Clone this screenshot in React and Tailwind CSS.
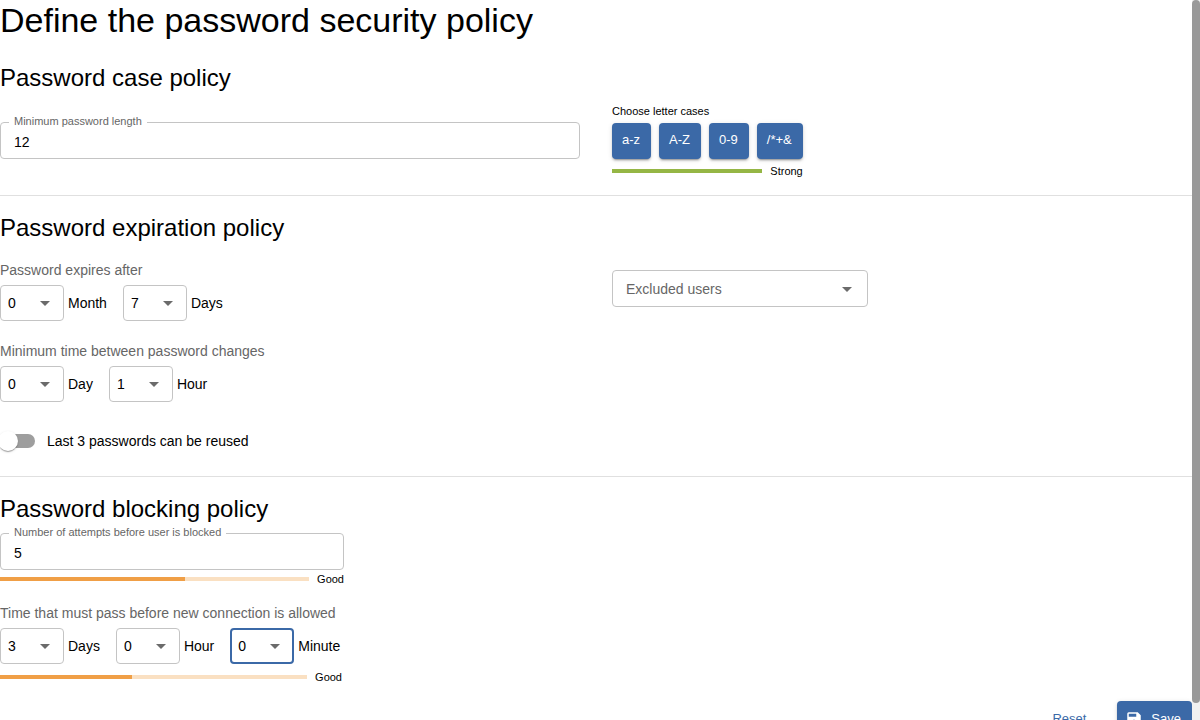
import React, { useState } from 'react';
import { MdSave, MdArrowDropDown } from 'react-icons/md';

const range = (n) => Array.from({ length: n }, (_, i) => i);

function UnitSelect({ id, unit, value, max, focused }) {
  const [current, setCurrent] = useState(value);
  return (
    <div className="flex items-center gap-1">
      <div className="relative">
        <select
          id={id}
          value={current}
          onChange={(e) => setCurrent(Number(e.target.value))}
          className={
            focused
              ? 'block h-9 w-16 appearance-none rounded border-2 border-[#3b69a7] bg-white pl-1.5 text-sm outline-none'
              : 'block h-9 w-16 appearance-none rounded border border-[#c4c4c4] bg-white pl-[7px] text-sm outline-none focus:border-[#3b69a7]'
          }
        >
          {range(max + 1).map((n) => (
            <option key={n} value={n}>
              {n}
            </option>
          ))}
        </select>
        <MdArrowDropDown
          size={24}
          className="pointer-events-none absolute top-1.5 right-[7px] text-[#6b6b6b]"
        />
      </div>
      <label htmlFor={id} className="text-sm">
        {unit}
      </label>
    </div>
  );
}

function TextField({ id, label, value }) {
  return (
    <fieldset className="rounded border border-[#c4c4c4]">
      <legend className="ml-2 px-[5px] pb-0.5 text-[11px] leading-3 text-[#666666]">
        <label htmlFor={id}>{label}</label>
      </legend>
      <input
        id={id}
        type="number"
        defaultValue={value}
        className="block h-[29px] w-full appearance-none bg-transparent px-[13px] pb-1 text-sm outline-none [appearance:textfield]"
      />
    </fieldset>
  );
}

function Strength({ label, percent, track, bar }) {
  return (
    <div className="flex items-center gap-2">
      <div className={`h-1 flex-1 ${track}`}>
        <div className={`h-full ${bar}`} style={{ width: `${percent}%` }} />
      </div>
      <span className="text-[11px] leading-3">{label}</span>
    </div>
  );
}

function CaseButton({ children }) {
  return (
    <button
      type="button"
      className="h-9 rounded bg-[#3b69a7] pr-[11px] pb-0.5 pl-2.5 text-[13px] text-white shadow-[0_3px_1px_-2px_rgba(0,0,0,0.2),0_2px_2px_0_rgba(0,0,0,0.14),0_1px_5px_0_rgba(0,0,0,0.12)]"
    >
      {children}
    </button>
  );
}

export default function App() {
  return (
    <div className="flex h-screen bg-white font-['Liberation_Sans',Arial,sans-serif] text-black">
      <main className="min-w-0 flex-1 overflow-y-auto [scrollbar-width:none]">
        <h1 className="text-[34px] leading-10">Define the password security policy</h1>

        <form>
          <section className="mt-[22px] border-b border-[#e0e0e0] pb-[18px]">
            <h2 className="text-2xl leading-8">Password case policy</h2>
            <div className="grid grid-cols-2 gap-8 pt-2">
              <div className="pt-[13px]">
                <TextField id="min-length" label="Minimum password length" value={12} />
              </div>
              <div className="w-fit">
                <p className="pt-px text-[11px] leading-4">Choose letter cases</p>
                <div className="mt-1 flex gap-2 pb-1.5">
                  <CaseButton>a-z</CaseButton>
                  <CaseButton>A-Z</CaseButton>
                  <CaseButton>0-9</CaseButton>
                  <CaseButton>/*+&amp;</CaseButton>
                </div>
                <Strength label="Strong" percent={100} track="bg-[#d5e2b5]" bar="bg-[#95b645]" />
              </div>
            </div>
          </section>

          <section className="border-b border-[#e0e0e0] pt-4 pb-[25px]">
            <h2 className="text-2xl leading-8">Password expiration policy</h2>
            <div className="grid grid-cols-2 gap-8 pt-4">
              <div>
                <p className="text-sm text-[#666666]">Password expires after</p>
                <div className="mt-[5px] flex gap-4">
                  <UnitSelect id="expire-month" unit="Month" value={0} max={12} />
                  <UnitSelect id="expire-days" unit="Days" value={7} max={30} />
                </div>
                <p className="mt-5 text-sm text-[#666666]">Minimum time between password changes</p>
                <div className="mt-[5px] flex gap-4">
                  <UnitSelect id="delay-day" unit="Day" value={0} max={7} />
                  <UnitSelect id="delay-hour" unit="Hour" value={1} max={23} />
                </div>
                <div className="mt-[29px] flex items-center gap-3 pl-px">
                  <input
                    id="reuse"
                    type="checkbox"
                    role="switch"
                    className="relative h-3.5 w-[34px] appearance-none rounded-full bg-[#9e9e9e] before:absolute before:-top-[3px] before:-left-[3px] before:size-5 before:rounded-full before:bg-white before:shadow-[0_2px_1px_-1px_rgba(0,0,0,0.2),0_1px_1px_0_rgba(0,0,0,0.14),0_1px_3px_0_rgba(0,0,0,0.12)] checked:bg-[#9db4d3] checked:before:left-[17px] checked:before:bg-[#3b69a7]"
                  />
                  <label htmlFor="reuse" className="text-sm">
                    Last 3 passwords can be reused
                  </label>
                </div>
              </div>
              <div className="pt-2.5">
                <div className="relative w-64">
                  <select
                    aria-label="Excluded users"
                    defaultValue=""
                    className="block h-[37px] w-full appearance-none rounded border border-[#c4c4c4] bg-white pl-[13px] text-sm text-[#666666] outline-none"
                  >
                    <option value="">Excluded users</option>
                  </select>
                  <MdArrowDropDown
                    size={24}
                    className="pointer-events-none absolute top-[7px] right-[9px] text-[#6b6b6b]"
                  />
                </div>
              </div>
            </div>
          </section>

          <section className="pt-4">
            <h2 className="text-2xl leading-8">Password blocking policy</h2>
            <div className="flex w-[344px] flex-col gap-[3px] pt-px">
              <TextField id="attempts" label="Number of attempts before user is blocked" value={5} />
              <Strength label="Good" percent={60} track="bg-[#fae0c2]" bar="bg-[#f09f46]" />
            </div>
            <div className="mt-[18px] w-[342px]">
              <p className="text-sm text-[#666666]">Time that must pass before new connection is allowed</p>
              <div className="mt-[5px] mb-[7px] flex gap-4">
                <UnitSelect id="block-days" unit="Days" value={3} max={7} />
                <UnitSelect id="block-hour" unit="Hour" value={0} max={23} />
                <UnitSelect id="block-minute" unit="Minute" value={0} max={59} focused />
              </div>
              <Strength label="Good" percent={43} track="bg-[#fae0c2]" bar="bg-[#f09f46]" />
            </div>
          </section>

          <div className="mt-[18px] flex justify-end gap-5">
            <button type="reset" className="h-9 pr-[11px] pl-2.5 text-[13px] text-[#3b69a7]">
              Reset
            </button>
            <button
              type="submit"
              className="flex h-9 items-center gap-2 rounded bg-[#3b69a7] pr-[11px] pl-2 text-[13px] text-white shadow-[0_3px_1px_-2px_rgba(0,0,0,0.2),0_2px_2px_0_rgba(0,0,0,0.14),0_1px_5px_0_rgba(0,0,0,0.12)]"
            >
              <MdSave size={18} />
              Save
            </button>
          </div>
        </form>
      </main>
      <div className="w-2 shrink-0 bg-[#f1f1f1]" aria-hidden="true">
        <div className="h-[97.6%] rounded-full bg-[#999999]" />
      </div>
    </div>
  );
}
